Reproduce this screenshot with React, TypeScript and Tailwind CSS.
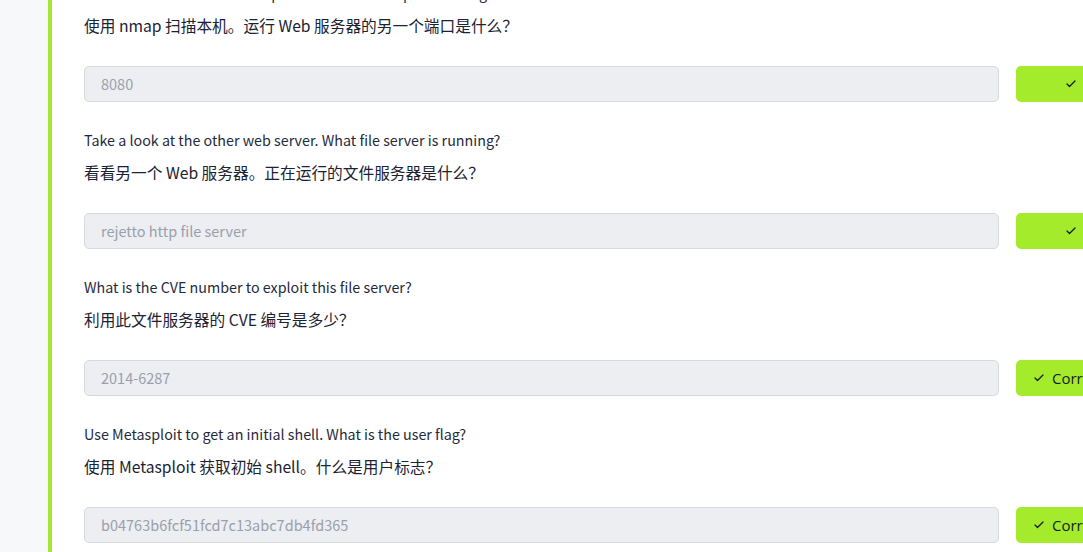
import React from 'react';
import { Check } from 'lucide-react';

interface Question {
  en: string;
  zh: string;
  answer: string;
  label: boolean;
}

const questions: Question[] = [
  {
    en: 'Scan this machine with nmap. What is the other port running a web server on?',
    zh: '使用 nmap 扫描本机。运行 Web 服务器的另一个端口是什么？',
    answer: '8080',
    label: false,
  },
  {
    en: 'Take a look at the other web server. What file server is running?',
    zh: '看看另一个 Web 服务器。正在运行的文件服务器是什么？',
    answer: 'rejetto http file server',
    label: false,
  },
  {
    en: 'What is the CVE number to exploit this file server?',
    zh: '利用此文件服务器的 CVE 编号是多少？',
    answer: '2014-6287',
    label: true,
  },
  {
    en: 'Use Metasploit to get an initial shell. What is the user flag?',
    zh: '使用 Metasploit 获取初始 shell。什么是用户标志？',
    answer: 'b04763b6fcf51fcd7c13abc7db4fd365',
    label: true,
  },
];

const font = { fontFamily: '"Noto Sans CJK SC", "Source Sans Pro", sans-serif' };

const App: React.FC = () => {
  return (
    <div className="flex h-[552px] w-[1083px] overflow-hidden bg-white" style={font}>
      <div className="w-[48px] shrink-0 bg-[#f7f8fa]" />
      <div className="flex-1 overflow-hidden border-l-4 border-[#a3e635] pl-[32px]">
        <div className="mt-[-19px]">
          {questions.map((q, i) => (
            <div key={i} className="mb-[26px]">
              <p className="text-[14.3px] leading-[24px] text-[#1f2a3d] whitespace-nowrap">{q.en}</p>
              <p className="mt-[9px] text-[15.7px] leading-[24px] text-[#1a2233] whitespace-nowrap">{q.zh}</p>
              <div className="mt-[28px] flex items-center gap-[17px]">
                <div className="flex h-[36px] w-[915px] shrink-0 items-center rounded-[5px] border border-[#d5d9e0] bg-[#eceef2] pl-[16px] text-[14.5px] text-[#9aa0ab]">
                  {q.answer}
                </div>
                {q.label ? (
                  <div
                    className="flex h-[36px] w-[160px] shrink-0 items-center gap-[7px] rounded-[5px] bg-[#a3eb2b] pl-[17px] text-[15px] text-[#151c28]"
                    style={{ fontFamily: '"Open Sans", sans-serif' }}
                  >
                    <Check size={12} strokeWidth={2.5} />
                    <span>Correct Answer</span>
                  </div>
                ) : (
                  <div className="flex h-[36px] w-[160px] shrink-0 items-center rounded-[5px] bg-[#a3eb2b] pl-[49px] text-[#151c28]">
                    <Check size={12} strokeWidth={2.5} />
                  </div>
                )}
              </div>
            </div>
          ))}
        </div>
      </div>
    </div>
  );
};

export default App;
